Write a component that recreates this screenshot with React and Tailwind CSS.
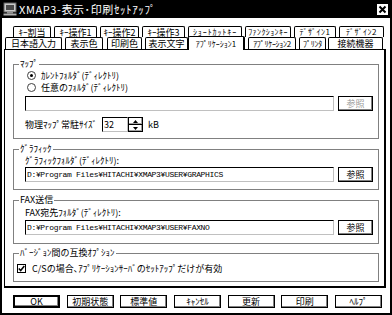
import React from "react";

const topTabs = [
  { label: "ｷｰ割当", cls: "ml-[11px] w-[38px] text-[9px]" },
  { label: "ｷｰ操作1", cls: "ml-[3px] w-[43px] text-[9px]" },
  { label: "ｷｰ操作2", cls: "ml-[3px] w-[39px] text-[9px]" },
  { label: "ｷｰ操作3", cls: "ml-[3px] w-[43px] text-[9px]" },
  { label: "ｼｮｰﾄｶｯﾄｷｰ", cls: "ml-[3px] w-[54px] text-[8px] tracking-[0.9px]" },
  { label: "ﾌｧﾝｸｼｮﾝｷｰ", cls: "ml-[3px] w-[46px] text-[8px] tracking-[0.4px]" },
  { label: "ﾃﾞｻﾞｲﾝ1", cls: "ml-[3px] w-[42px] text-[8px] tracking-[0.5px]" },
  { label: "ﾃﾞｻﾞｲﾝ2", cls: "ml-[3px] w-[45px] text-[8px] tracking-[0.5px]" },
];

const frontTabs = [
  { label: "日本語入力", cls: "ml-[3px] w-[57px] text-[9px]" },
  { label: "表示色", cls: "ml-[3px] w-[38px] text-[9px]" },
  { label: "印刷色", cls: "ml-[4px] w-[35px] text-[9px]" },
  { label: "表示文字", cls: "ml-[3px] w-[43px] text-[9px]" },
  { label: "ｱﾌﾟﾘｹｰｼｮﾝ1", cls: "ml-0 w-[57px] text-[8px]", active: true },
  { label: "ｱﾌﾟﾘｹｰｼｮﾝ2", cls: "ml-[3px] w-[48px] text-[8px] tracking-[-0.3px]" },
  { label: "ﾌﾟﾘﾝﾀ", cls: "ml-[3px] w-[27px] text-[8px] tracking-[-0.3px]" },
  { label: "接続機器", cls: "ml-[2px] w-[55px] text-[9px]" },
];

const footer = [
  { label: "OK", def: true },
  { label: "初期状態" },
  { label: "標準値" },
  { label: "ｷｬﾝｾﾙ" },
  { label: "更新" },
  { label: "印刷" },
  { label: "ﾍﾙﾌﾟ" },
];

function Group({ title, cls, children }) {
  return (
    <fieldset className={"ml-[8px] w-[366px] border border-[#808080] " + cls}>
      <legend className="ml-[5px] px-[1px] text-[9px] leading-[10px]">{title}</legend>
      {children}
    </fieldset>
  );
}

function Field({ value, cls }) {
  return (
    <div className={"h-[15px] bg-white border border-[#c0c0c0] border-t-black border-l-black flex items-center pl-[1px] font-['Liberation_Mono',monospace] text-[8px] tracking-[-0.35px] leading-none overflow-hidden whitespace-nowrap " + cls}>
      {value}
    </div>
  );
}

function Browse({ disabled }) {
  return (
    <div className={"ml-[4px] w-[35px] h-[15px] bg-white border border-black shadow-[inset_-1px_-1px_0_#808080] flex items-center justify-center text-[9px] leading-none " + (disabled ? "text-[#9a9a9a]" : "text-black")}>
      参照
    </div>
  );
}

export default function App() {
  return (
    <div className="w-[392px] h-[315px] bg-white text-black font-['Noto_Sans_CJK_JP',sans-serif] flex flex-col">
      {/* title bar */}
      <div className="h-[18px] bg-black flex items-center">
        <svg width="14" height="14" viewBox="0 0 14 14" className="ml-[3px]">
          <rect x="1" y="1" width="12" height="9" fill="#c8c8c8" stroke="#606060" />
          <rect x="3" y="3" width="8" height="5" fill="#4a4a4a" />
          <rect x="4" y="10" width="6" height="1.5" fill="#909090" />
          <rect x="0.5" y="11.5" width="13" height="2" fill="#b0b0b0" />
        </svg>
        <span className="ml-[2px] text-white text-[11px] leading-none tracking-[0.6px]">XMAP3-表示･印刷ｾｯﾄｱｯﾌﾟ</span>
        <div className="ml-auto mr-[4px] w-[11px] h-[11px] bg-white flex items-center justify-center">
          <svg width="9" height="9" viewBox="0 0 9 9">
            <path d="M1.5 1.5 L7.5 7.5 M7.5 1.5 L1.5 7.5" stroke="black" strokeWidth="2" />
          </svg>
        </div>
      </div>

      {/* body */}
      <div className="flex-1 border-x-2 border-b-2 border-black flex flex-col">
        <div className="mt-[8px] flex h-[11px]">
          {topTabs.map((t) => (
            <div key={t.label} className={"h-[11px] border-t border-x border-black rounded-t-[2px] bg-white flex items-center justify-center leading-none whitespace-nowrap overflow-hidden " + t.cls}>
              {t.label}
            </div>
          ))}
        </div>
        <div className="flex items-end h-[12px]">
          {frontTabs.map((t) => (
            <div
              key={t.label}
              className={
                "border-t border-x border-black rounded-t-[2px] bg-white flex items-center justify-center leading-none whitespace-nowrap overflow-hidden " +
                t.cls +
                (t.active ? " h-[14px] -mb-px relative z-10 border-r-2" : " h-[12px]")
              }
            >
              {t.label}
            </div>
          ))}
        </div>

        {/* tab panel */}
        <div className="ml-[2px] w-[382px] h-[239px] border-t border-l border-black border-r-2 border-b-2 flex flex-col">
          <Group title="ﾏｯﾌﾟ" cls="mt-[9px] h-[80px]">
            <div className="mt-[1px] h-[10px] flex items-center pl-[13px] text-[9px] leading-none">
              <span className="w-[9px] h-[9px] rounded-full border border-[#404040] bg-white flex items-center justify-center">
                <span className="w-[3px] h-[3px] rounded-full bg-black" />
              </span>
              <span className="ml-[5px]">ｶﾚﾝﾄﾌｫﾙﾀﾞ(ﾃﾞｨﾚｸﾄﾘ)</span>
            </div>
            <div className="mt-[2px] h-[10px] flex items-center pl-[13px] text-[9px] leading-none">
              <span className="w-[9px] h-[9px] rounded-full border border-[#404040] bg-white" />
              <span className="ml-[5px]">任意のﾌｫﾙﾀﾞ(ﾃﾞｨﾚｸﾄﾘ)</span>
            </div>
            <div className="mt-[4px] flex items-center pl-[11px]">
              <Field value="" cls="w-[309px]" />
              <Browse disabled />
            </div>
            <div className="mt-[6px] flex items-center pl-[11px] text-[9px] leading-none">
              <span className="w-[77px]">物理ﾏｯﾌﾟ常駐ｻｲｽﾞ</span>
              <Field value="32" cls="w-[26px] font-['Noto_Sans_CJK_JP',sans-serif] text-[9px] tracking-normal" />
              <div className="w-[15px] h-[15px] flex flex-col border border-black">
                <div className="flex-1 bg-white border-b border-black flex items-center justify-center shadow-[inset_-1px_-1px_0_#a0a0a0]">
                  <svg width="5" height="3" viewBox="0 0 5 3"><path d="M0 3 L2.5 0 L5 3 Z" fill="black" /></svg>
                </div>
                <div className="flex-1 bg-white flex items-center justify-center shadow-[inset_-1px_-1px_0_#a0a0a0]">
                  <svg width="5" height="3" viewBox="0 0 5 3"><path d="M0 0 L2.5 3 L5 0 Z" fill="black" /></svg>
                </div>
              </div>
              <span className="ml-[5px]">kB</span>
            </div>
          </Group>

          <Group title="ｸﾞﾗﾌｨｯｸ" cls="mt-[5px] h-[46px]">
            <div className="mt-[1px] h-[10px] flex items-center pl-[11px] text-[9px] leading-none">ｸﾞﾗﾌｨｯｸﾌｫﾙﾀﾞ(ﾃﾞｨﾚｸﾄﾘ):</div>
            <div className="mt-[2px] flex items-center pl-[11px]">
              <Field value="D:¥Program Files¥HITACHI¥XMAP3¥USER¥GRAPHICS" cls="w-[309px]" />
              <Browse />
            </div>
          </Group>

          <Group title="FAX送信" cls="mt-[5px] h-[49px]">
            <div className="mt-[2px] h-[10px] flex items-center pl-[11px] text-[9px] leading-none">FAX宛先ﾌｫﾙﾀﾞ(ﾃﾞｨﾚｸﾄﾘ):</div>
            <div className="mt-[3px] flex items-center pl-[11px]">
              <Field value="D:¥Program Files¥HITACHI¥XMAP3¥USER¥FAXNO" cls="w-[309px]" />
              <Browse />
            </div>
          </Group>

          <Group title="ﾊﾞｰｼﾞｮﾝ間の互換ｵﾌﾟｼｮﾝ" cls="mt-[4px] h-[34px]">
            <div className="mt-[5px] h-[10px] flex items-center pl-[3px] text-[9px] leading-none">
              <span className="w-[9px] h-[9px] border border-black bg-white flex items-center justify-center">
                <svg width="7" height="7" viewBox="0 0 7 7">
                  <path d="M0.8 3.4 L2.7 5.5 L6.3 1" stroke="black" strokeWidth="1.5" fill="none" />
                </svg>
              </span>
              <span className="ml-[6px]">C/Sの場合､ｱﾌﾟﾘｹｰｼｮﾝｻｰﾊﾞのｾｯﾄｱｯﾌﾟだけが有効</span>
            </div>
          </Group>
        </div>

        {/* buttons */}
        <div className="mt-[7px] ml-[11px] w-[369px] flex justify-between">
          {footer.map((b) => (
            <div
              key={b.label}
              className={
                "w-[47px] h-[13px] bg-white border-black shadow-[inset_-1px_-1px_0_#808080] flex items-center justify-center text-[9px] leading-none " +
                (b.def ? "border-2" : "border")
              }
            >
              {b.label}
            </div>
          ))}
        </div>
      </div>
    </div>
  );
}
